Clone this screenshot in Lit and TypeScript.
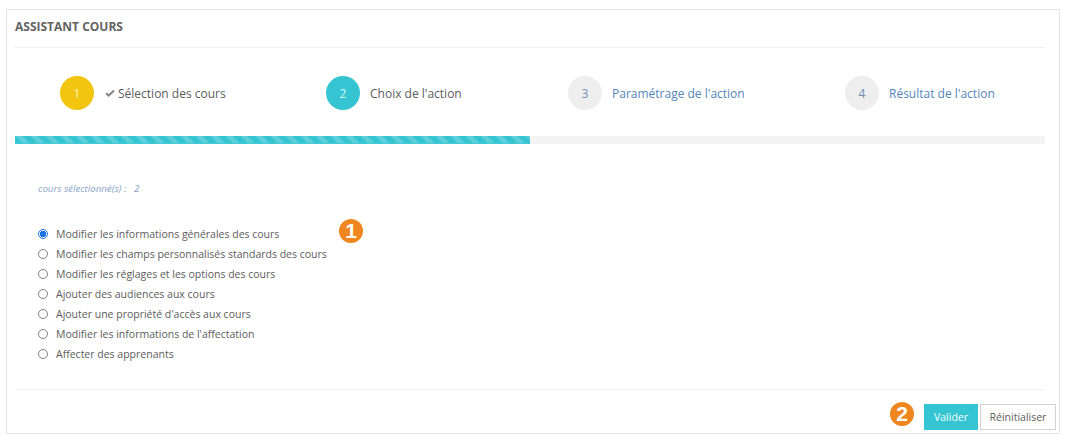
import { customElement, state } from "lit/decorators.js";
import { html, css, LitElement } from "lit";

const STEPS = [
  { n: 1, label: "Sélection des cours", kind: "done" },
  { n: 2, label: "Choix de l'action", kind: "current" },
  { n: 3, label: "Paramétrage de l'action", kind: "todo" },
  { n: 4, label: "Résultat de l'action", kind: "todo" },
];

const ACTIONS = [
  "Modifier les informations générales des cours",
  "Modifier les champs personnalisés standards des cours",
  "Modifier les réglages et les options des cours",
  "Ajouter des audiences aux cours",
  "Ajouter une propriété d'accès aux cours",
  "Modifier les informations de l'affectation",
  "Affecter des apprenants",
];

@customElement("app-root")
export class AppRoot extends LitElement {
  @state()
  selected: number = 0;

  static styles = [
    css`
      * {
        box-sizing: border-box;
      }

      :host {
        display: block;
        box-sizing: border-box;
        width: 1065px;
        height: 438px;
        padding: 9px 5px 4px 6px;
        background: #ffffff;
        font-family: "Open Sans", sans-serif;
        color: #5c5c5c;
      }

      .panel {
        height: 425px;
        border: 1px solid #e4e4e4;
        padding: 0 14px 0 8px;
        display: flex;
        flex-direction: column;
      }

      .title {
        height: 38px;
        border-bottom: 1px solid #f0f0f0;
        font-size: 12px;
        font-weight: 700;
        line-height: 34px;
        color: #636363;
        flex: none;
      }

      .steps {
        display: grid;
        grid-template-columns: 266px 242px 277px 1fr;
        padding: 28px 0 0 45px;
        height: 88px;
        flex: none;
      }

      .step {
        display: flex;
        align-items: center;
        height: 34px;
        font-size: 12px;
      }

      .circle {
        width: 34px;
        height: 34px;
        border-radius: 50%;
        display: flex;
        align-items: center;
        justify-content: center;
        font-size: 12px;
        margin-right: 10px;
        flex: none;
      }

      .done .circle {
        background: #f2c511;
        color: #fdf3c4;
        margin-right: 11px;
      }

      .current .circle {
        background: #35c4d2;
        color: #d6f3f6;
        margin-right: 10px;
      }

      .todo .circle {
        background: #eeeeee;
        color: #6f8fb8;
      }

      .todo .label {
        color: #5585bb;
      }

      .check {
        width: 10px;
        height: 8px;
        margin-right: 3px;
        flex: none;
      }

      .track {
        height: 8px;
        background: #f4f4f4;
        flex: none;
      }

      .fill {
        height: 100%;
        background: repeating-linear-gradient(
          45deg,
          #35c4d2 0 5.3px,
          #5ccfda 5.3px 10.6px
        );
        border-bottom: 1px solid #45c9d6;
      }

      .count {
        margin: 39px 0 0 23px;
        height: 12px;
        font-size: 9.7px;
        line-height: 12px;
        font-style: italic;
        color: #86a3c9;
        flex: none;
        white-space: pre;
      }

      .options {
        position: relative;
        margin: 28.6px 0 0 22px;
        flex: 1;
      }

      .option {
        display: flex;
        align-items: center;
        height: 20.1px;
        font-size: 10.5px;
        color: #5c5c5c;
      }

      .radio {
        width: 10px;
        height: 10px;
        margin: 0 8px 0 1px;
        border: 1px solid #808080;
        border-radius: 50%;
        background: #fff;
        flex: none;
      }

      .radio.on {
        border: 1.5px solid #1a73e8;
        background: radial-gradient(circle, #1a73e8 0 3px, #fff 3.4px);
      }

      .badge {
        width: 24px;
        height: 24px;
        border-radius: 50%;
        background: #f0861f;
        color: #ffffff;
        font-family: "Liberation Sans", sans-serif;
        font-weight: 700;
        font-size: 21px;
        display: flex;
        align-items: center;
        justify-content: center;
        flex: none;
      }

      .options .badge {
        position: absolute;
        left: 302px;
        top: -4.6px;
      }

      .footer {
        border-top: 1px solid #f0f0f0;
        height: 44px;
        padding-top: 14px;
        margin-right: -11px;
        display: flex;
        justify-content: flex-end;
        align-items: flex-start;
        flex: none;
        position: relative;
      }

      .footer::after {
        content: "";
        position: absolute;
        top: -1px;
        right: 0;
        width: 11px;
        height: 1px;
        background: #fff;
      }

      .footer .badge {
        margin: -2px 10px 0 0;
      }

      button {
        height: 26px;
        font-family: inherit;
        font-size: 10.5px;
        padding: 0;
        cursor: pointer;
      }

      .primary {
        width: 54px;
        background: #35c4d2;
        border: 1px solid #35c4d2;
        color: #f4fcfd;
      }

      .secondary {
        width: 76px;
        margin-left: 2px;
        background: #fff;
        border: 1px solid #d2d2d2;
        color: #5c5c5c;
      }
    `,
  ];

  render() {
    return html`
      <div class="panel">
        <div class="title">ASSISTANT COURS</div>
        <div class="steps">
          ${STEPS.map(
            (s) => html`
              <div class="step ${s.kind}">
                <span class="circle">${s.n}</span>
                ${s.kind === "done"
                  ? html`<svg class="check" viewBox="0 0 10 8">
                      <path d="M1 4.2 L3.7 6.6 L9 1.6" fill="none" stroke="#858585" stroke-width="2" />
                    </svg>`
                  : ""}
                <span class="label">${s.label}</span>
              </div>
            `
          )}
        </div>
        <div class="track"><div class="fill" style="width: 50%"></div></div>
        <div class="count">cours sélectionné(s) :   2</div>
        <div class="options">
          ${ACTIONS.map(
            (a, i) => html`
              <div class="option" @click=${() => (this.selected = i)}>
                <span class="radio ${i === this.selected ? "on" : ""}"></span>
                <span>${a}</span>
              </div>
            `
          )}
          <span class="badge">1</span>
        </div>
        <div class="footer">
          <span class="badge">2</span>
          <button class="primary">Valider</button>
          <button class="secondary">Réinitialiser</button>
        </div>
      </div>
    `;
  }
}
